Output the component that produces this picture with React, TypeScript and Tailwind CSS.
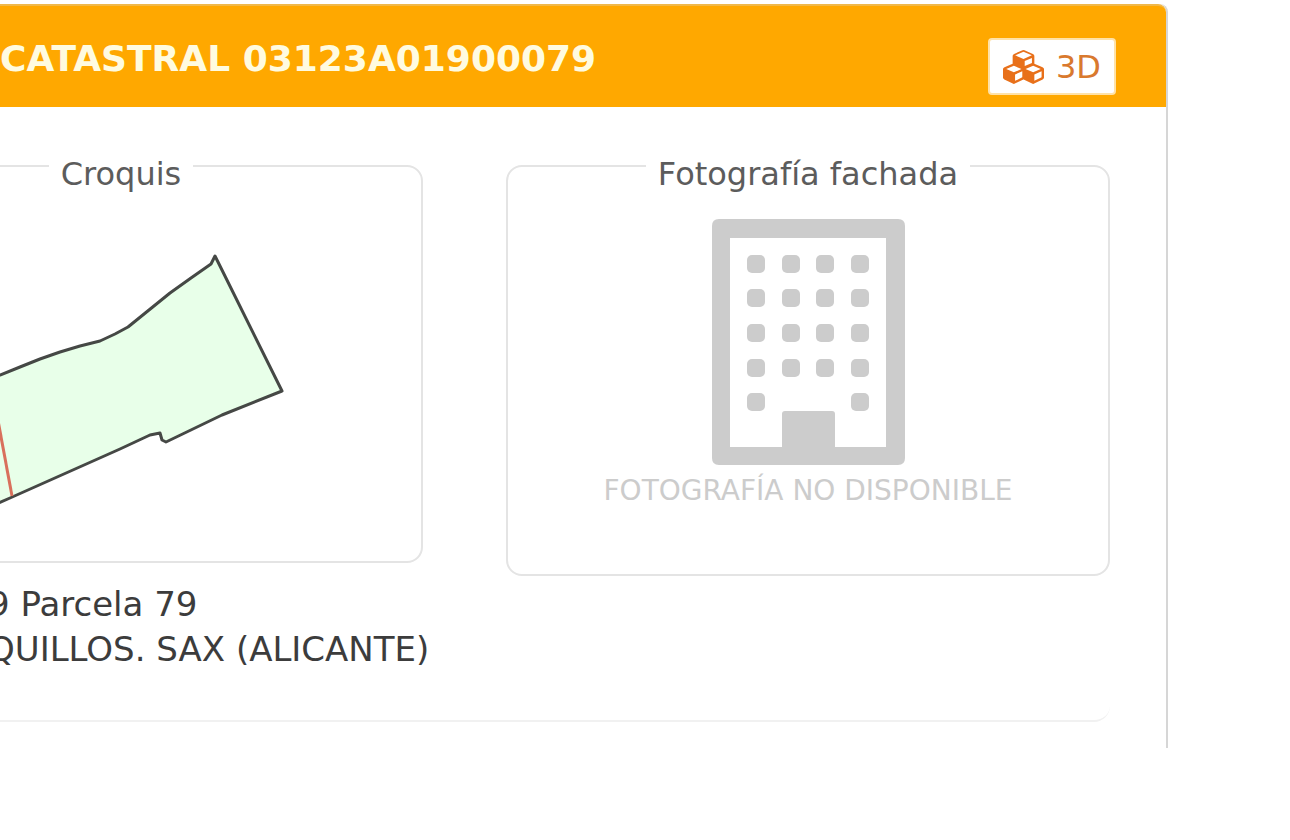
import React from 'react';

const WINDOW_COLS = [44, 79, 113, 148];
const WINDOW_ROWS = [45, 79, 114, 149, 183];

function CubesIcon() {
  return (
    <svg width="41" height="34" viewBox="0 0 2176 1792" fill="#e8701a" aria-hidden="true">
      <path d="M640 1632l384-192v-314l-384 164v342zM576 1178l404-173-404-173-404 173zM1664 1632l384-192v-314l-384 164v342zM1600 1178l404-173-404-173-404 173zM1152 847l384-165v-266l-384 164v267zM1088 468l441-189-441-189-441 189zM2176 1024v416q0 36-19 67t-52 47l-448 224q-25 14-57 14t-57-14l-448-224q-5-2-7-4-2 2-7 4l-448 224q-25 14-57 14t-57-14l-448-224q-33-16-52-47t-19-67v-416q0-38 21.5-70t56.5-48l434-186v-400q0-38 21.5-70t56.5-48l448-192q23-10 50-10t50 10l448 192q35 16 56.500 48t21.500 70v400l434 186q36 16 57 48t21 70z" />
    </svg>
  );
}

function BuildingIcon() {
  return (
    <svg width="193" height="246" viewBox="0 0 193 246" fill="#cccccc" aria-hidden="true">
      <path
        fillRule="evenodd"
        d="M7 0H186Q193 0 193 7V239Q193 246 186 246H7Q0 246 0 239V7Q0 0 7 0ZM18 19V228H70V195Q70 192 73 192H120Q123 192 123 195V228H174V19Z"
      />
      {WINDOW_ROWS.map((y, row) =>
        WINDOW_COLS.map((x, col) => {
          // The door takes the place of the two middle windows
          if (row === 4 && (col === 1 || col === 2)) return null;
          return <rect key={`${x}-${y}`} x={x - 9} y={y - 9} width="18" height="18" rx="5" />;
        })
      )}
    </svg>
  );
}

function ParcelSketch() {
  return (
    <svg viewBox="0 0 600 367" className="block w-full" role="img" aria-label="Croquis de la parcela">
      <path
        d="M119 203L179 181L199 173L219 165L239 158L259 152L279 147L294 140L307 133L328 116L349 99L370 84L390 70L394 62L398 70L461 197L401 221L345 248L341 246L339 239L329 241L299 255L189 304L119 335Z"
        fill="#e8ffe9"
        stroke="#454845"
        strokeWidth="3"
        strokeLinejoin="round"
      />
      <path d="M176 221L191 302" stroke="#d9705c" strokeWidth="3" />
    </svg>
  );
}

interface PanelProps {
  title: string;
  children: React.ReactNode;
}

function Panel({ title, children }: PanelProps) {
  return (
    <fieldset className="min-w-0 rounded-2xl border-2 border-[#e4e4e4]">
      <legend className="mx-auto px-3 pt-4 text-[32px] leading-10 text-[#5c5c5c]">{title}</legend>
      {children}
    </fieldset>
  );
}

export default function App() {
  return (
    <main
      className="overflow-hidden pt-1 pr-[122px]"
      style={{ fontFamily: '"DejaVu Sans", sans-serif' }}
    >
      <section className="rounded-tr-lg border-r-2 border-[#d6d6d6] pb-[26px]">
        <header className="flex items-start justify-between rounded-tr-lg border-t-2 border-[#f0b84a] bg-[#ffa800] pt-8 pr-[50px] pb-3">
          <h1 className="text-[36px] leading-[42px] font-bold whitespace-nowrap text-[#fffbe0]">
            CATASTRAL 03123A01900079
          </h1>
          <button
            type="button"
            className="flex h-[57px] items-center gap-3 rounded border-2 border-[#ffe2a8] bg-white px-[13px] text-[32px] text-[#d9792e]"
          >
            <CubesIcon />
            3D
          </button>
        </header>

        <div className="mr-[56px] -ml-[181px] rounded-br-2xl border-b-2 border-[#f1f1f1] pt-[31px] pb-12">
          <div className="grid grid-cols-2 items-start gap-x-[83px]">
            <div>
              <Panel title="Croquis">
                <ParcelSketch />
              </Panel>
              <p className="pt-[19px] pl-[169px] text-[34px] leading-[45px] whitespace-nowrap text-[#3c3c3c]">
                9 Parcela 79
                <br />
                QUILLOS. SAX (ALICANTE)
              </p>
            </div>

            <Panel title="Fotografía fachada">
              <div className="flex flex-col items-center pt-[25px] pb-[61px]">
                <BuildingIcon />
                <p className="pt-1 text-[28px] leading-[44px] whitespace-nowrap text-[#cccccc]">
                  FOTOGRAFÍA NO DISPONIBLE
                </p>
              </div>
            </Panel>
          </div>
        </div>
      </section>
    </main>
  );
}
